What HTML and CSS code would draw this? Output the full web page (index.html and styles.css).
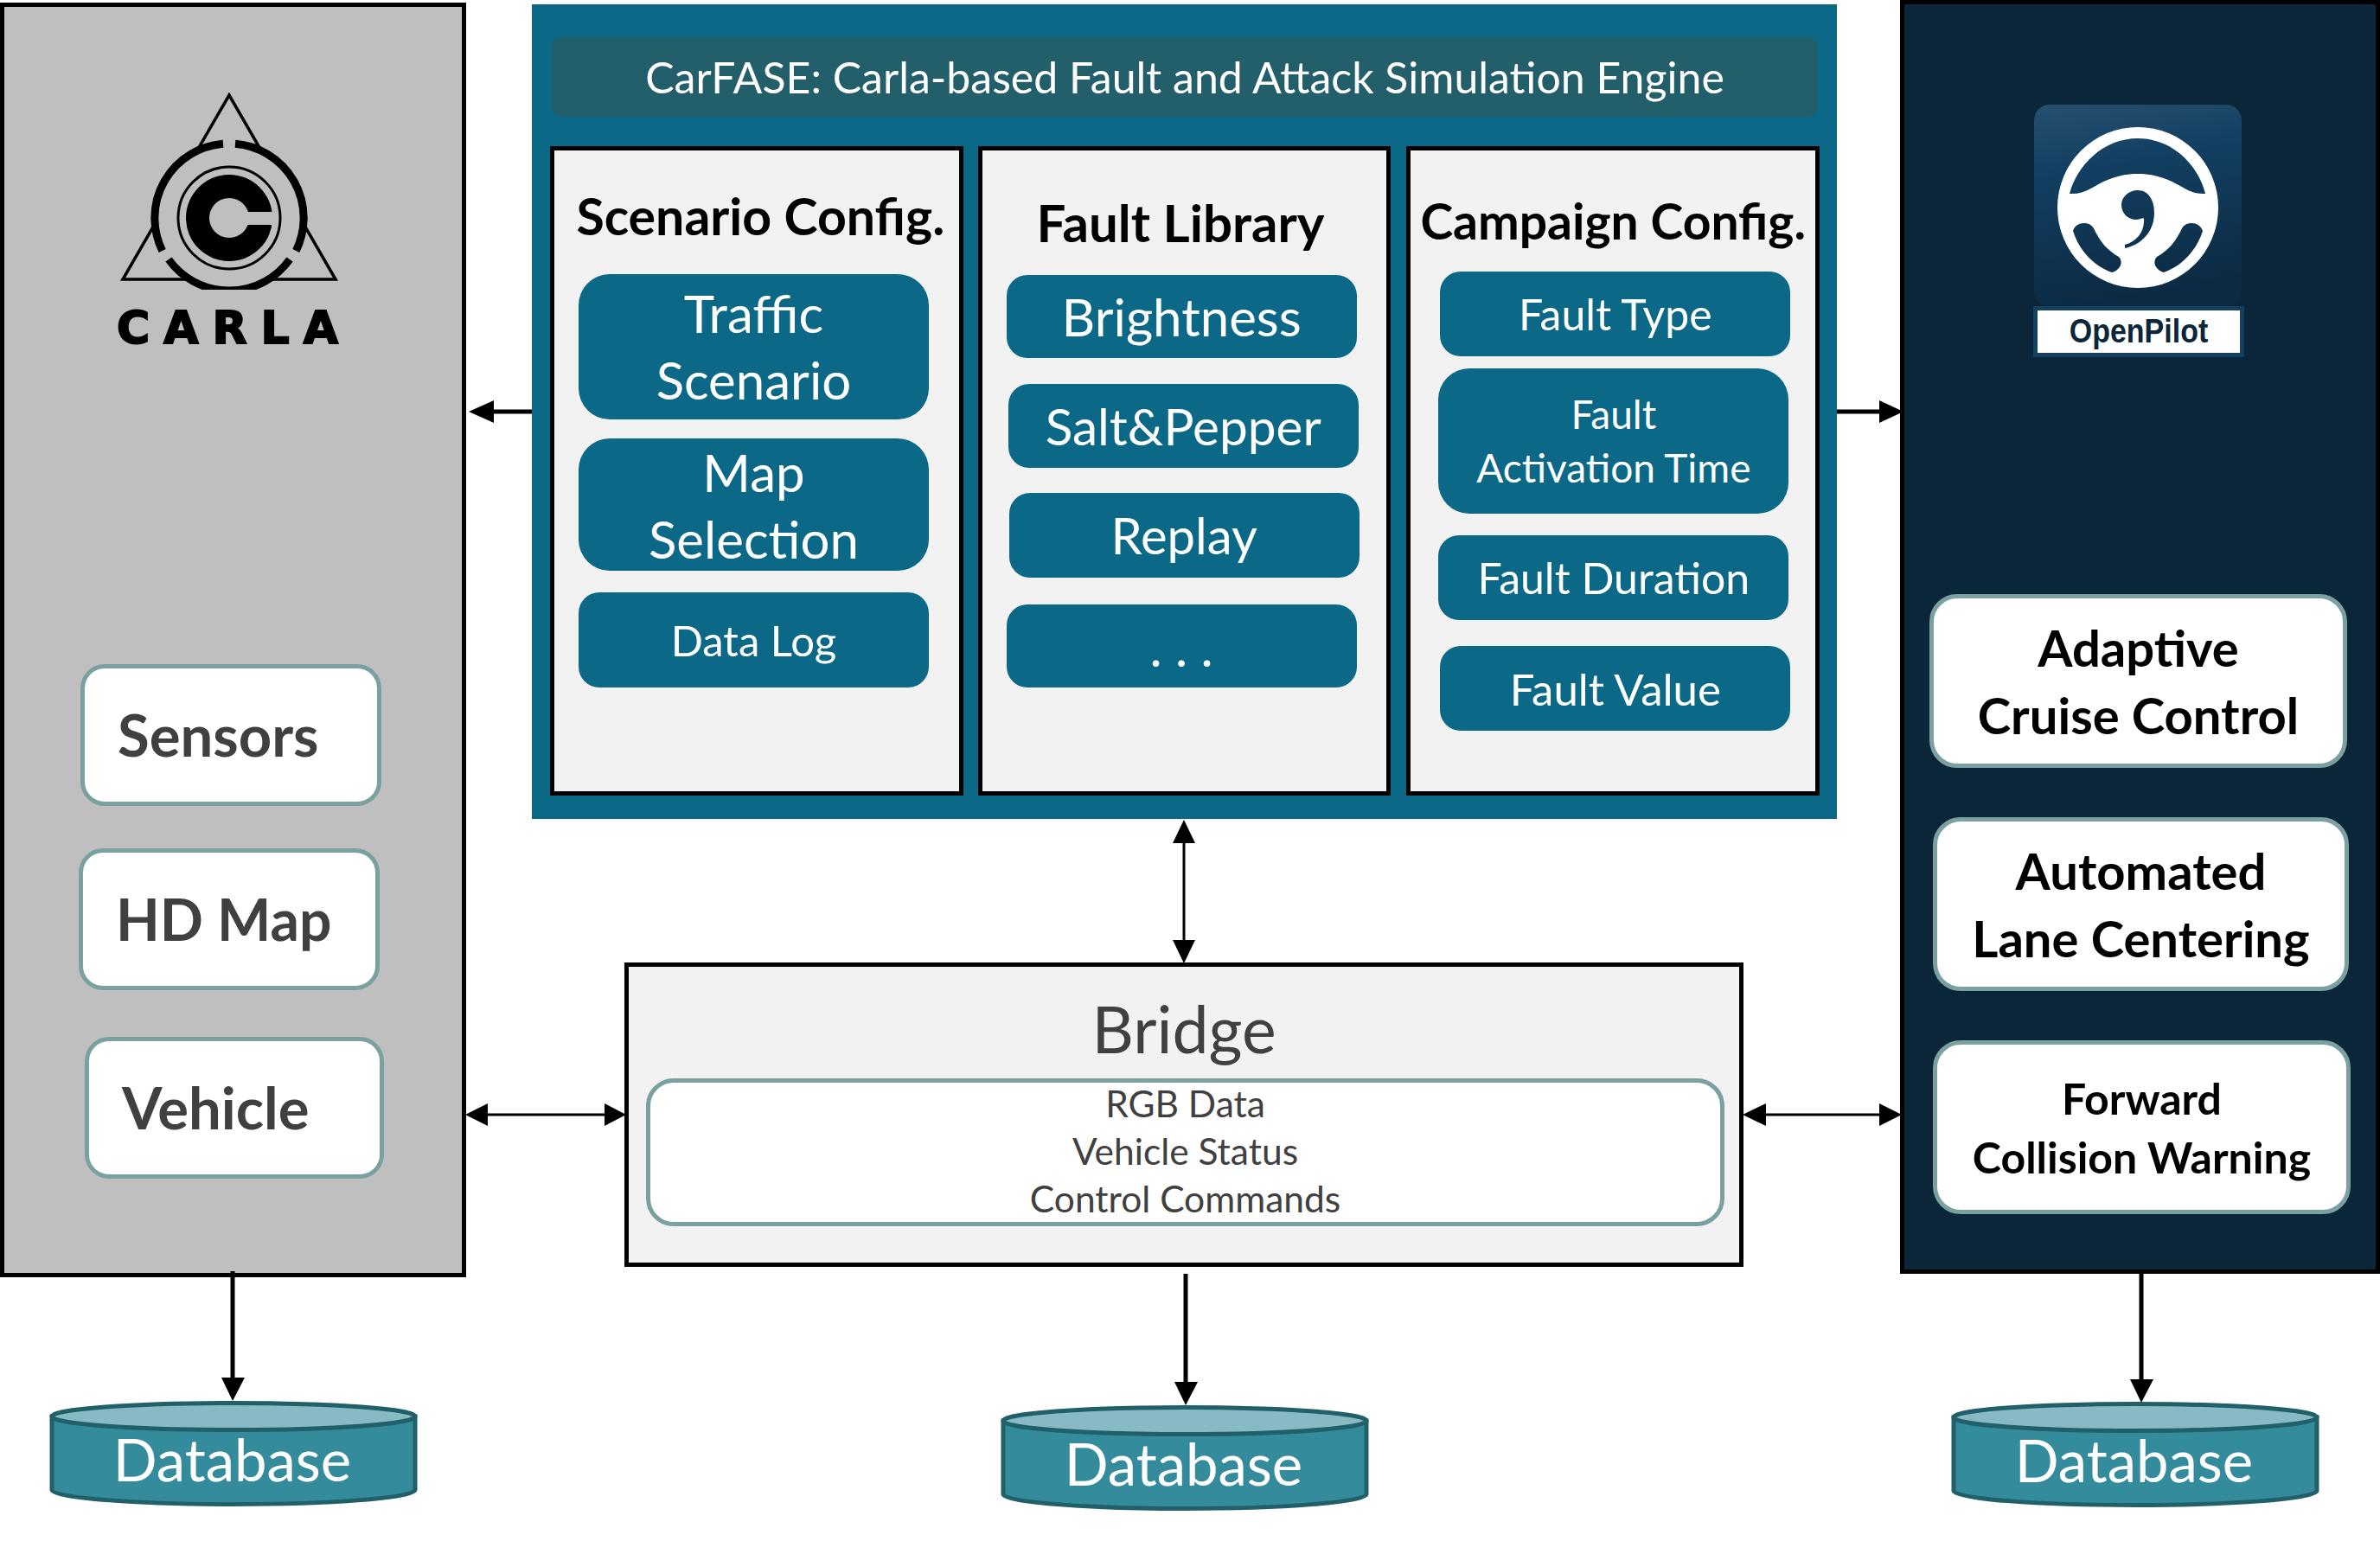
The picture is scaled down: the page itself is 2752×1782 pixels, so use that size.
FILE: index.html
```html
<!DOCTYPE html>
<html lang="en">
<head>
    <meta charset="UTF-8">
    <meta name="viewport" content="width=device-width, initial-scale=1.0">
    <title>CarFASE Architecture</title>
    <link rel="stylesheet" href="styles.css">
</head>
<body>
<div class="canvas">

    <!-- CARLA side -->
    <section class="node carla-panel">
        <div class="carla-logo">
            <svg class="carla-mark" viewBox="135 100 260 235" aria-hidden="true">
                <polygon class="mark-tri" points="265,110 142,323 388,323"/>
                <circle class="mark-mask" cx="265" cy="252" r="86"/>
                <path class="mark-ring" d="M272 166.3A86 86 0 0 1 342.3 290M187.7 290A86 86 0 0 1 258 166.3M195 300A86 86 0 0 0 335 300"/>
                <circle class="mark-thin" cx="265" cy="252" r="59"/>
                <circle cx="265" cy="252" r="50"/>
                <circle class="mark-hole" cx="265" cy="252" r="23"/>
                <rect class="mark-hole" x="265" y="245" width="55" height="15"/>
            </svg>
            <div class="carla-word">CARLA</div>
        </div>
        <div class="sim-box sensors">Sensors</div>
        <div class="sim-box hdmap">HD Map</div>
        <div class="sim-box vehicle">Vehicle</div>
    </section>

    <!-- CarFASE engine -->
    <section class="node engine">
        <div class="engine-title">CarFASE: Carla-based Fault and Attack Simulation Engine</div>
        <div class="engine-cards">
            <div class="card">
                <h3 class="card-title title-scenario">Scenario Config.</h3>
                <div class="pill traffic">Traffic<br>Scenario</div>
                <div class="pill mapsel">Map<br>Selection</div>
                <div class="pill datalog">Data Log</div>
            </div>
            <div class="card">
                <h3 class="card-title title-fault">Fault Library</h3>
                <div class="pill brightness">Brightness</div>
                <div class="pill salt">Salt&amp;Pepper</div>
                <div class="pill replay">Replay</div>
                <div class="pill more">. . .</div>
            </div>
            <div class="card card-campaign">
                <h3 class="card-title title-campaign">Campaign Config.</h3>
                <div class="pill ftype">Fault Type</div>
                <div class="pill factivation">Fault<br>Activation Time</div>
                <div class="pill fduration">Fault Duration</div>
                <div class="pill fvalue">Fault Value</div>
            </div>
        </div>
    </section>

    <!-- OpenPilot side -->
    <section class="node pilot-panel">
        <div class="pilot-logo">
            <div class="pilot-icon">
                <svg viewBox="0 0 240 233" aria-hidden="true">
                    <path class="wheel" fill-rule="evenodd" d="M27 119a93 93 0 1 0 186 0a93 93 0 1 0 -186 0Z
                        M41 103C50 70 80 39 120 39C160 39 190 70 198 103C180 104 172 94 155 87C140 81 130 80 120 80C110 80 100 81 85 87C68 94 60 104 41 103Z
                        M45 146C47 140 52 137 58 137C64 137 67 140 69 143C76 158 84 168 98 176C101 179 101 183 100 186C98 190 94 193 90 194C68 186 52 168 45 146Z
                        M195 146C193 140 188 137 182 137C176 137 173 140 171 143C164 158 156 168 142 176C139 179 139 183 140 186C142 190 146 193 150 194C172 186 188 168 195 146Z
                        M120 99C109 99 101 107 101 116C101 125 108 133 118 133C123 133 126 130 127 132C128 148 118 158 105 162L105 166C125 162 139 146 139 125C139 110 132 99 120 99Z"/>
                </svg>
            </div>
            <div class="pilot-label"><span>OpenPilot</span></div>
        </div>
        <div class="feature acc">Adaptive<br>Cruise Control</div>
        <div class="feature alc">Automated<br>Lane Centering</div>
        <div class="feature fcw">Forward<br>Collision Warning</div>
    </section>

    <!-- Bridge -->
    <section class="node bridge">
        <div class="bridge-title">Bridge</div>
        <div class="bridge-data">
            <div>RGB Data</div>
            <div>Vehicle Status</div>
            <div>Control Commands</div>
        </div>
    </section>

    <!-- Databases -->
    <div class="node db db-left">
        <svg class="db-shape" viewBox="0 0 426 122" aria-hidden="true">
            <path class="db-body" d="M3 18V103C3 112 100 119.5 213 119.5C326 119.5 423 112 423 103V18Z"/>
            <ellipse class="db-top" cx="213" cy="18" rx="210" ry="15.5"/>
        </svg>
        <span class="db-label">Database</span>
    </div>
    <div class="node db db-mid">
        <svg class="db-shape" viewBox="0 0 426 122" aria-hidden="true">
            <path class="db-body" d="M3 18V103C3 112 100 119.5 213 119.5C326 119.5 423 112 423 103V18Z"/>
            <ellipse class="db-top" cx="213" cy="18" rx="210" ry="15.5"/>
        </svg>
        <span class="db-label">Database</span>
    </div>
    <div class="node db db-right">
        <svg class="db-shape" viewBox="0 0 426 122" aria-hidden="true">
            <path class="db-body" d="M3 18V103C3 112 100 119.5 213 119.5C326 119.5 423 112 423 103V18Z"/>
            <ellipse class="db-top" cx="213" cy="18" rx="210" ry="15.5"/>
        </svg>
        <span class="db-label">Database</span>
    </div>

    <!-- Arrows between the blocks -->
    <svg class="wires" viewBox="0 0 2752 1782" aria-hidden="true">
        <line class="wire-thick" x1="565" y1="476" x2="615" y2="476"/>
        <polygon points="542,476 571,463 571,489"/>
        <line class="wire-thick" x1="2124" y1="476" x2="2180" y2="476"/>
        <polygon points="2201,476 2173,463 2173,489"/>

        <line class="wire-thin" x1="1369" y1="970" x2="1369" y2="1090"/>
        <polygon points="1369,948 1356,975 1382,975"/>
        <polygon points="1369,1114 1356,1087 1382,1087"/>

        <line class="wire-thin" x1="560" y1="1289" x2="700" y2="1289"/>
        <polygon points="538,1289 564,1276 564,1302"/>
        <polygon points="724,1289 699,1276 699,1302"/>

        <line class="wire-thin" x1="2035" y1="1289" x2="2175" y2="1289"/>
        <polygon points="2015,1289 2042,1276 2042,1302"/>
        <polygon points="2199,1289 2173,1276 2173,1302"/>

        <line class="wire-thick" x1="269" y1="1470" x2="269" y2="1600"/>
        <polygon points="269,1620 256,1593 283,1593"/>
        <line class="wire-thick" x1="1371" y1="1473" x2="1371" y2="1605"/>
        <polygon points="1371,1625 1358,1598 1385,1598"/>
        <line class="wire-thick" x1="2476" y1="1471" x2="2476" y2="1602"/>
        <polygon points="2476,1622 2463,1595 2490,1595"/>
    </svg>
</div>
</body>
</html>
```

FILE: styles.css
```css
* {
    box-sizing: border-box;
}
body {
    margin: 0;
    background-color: white;
    font-family: Lato, "Open Sans", sans-serif;
}
.canvas {
    position: relative;
    width: 2752px;
    height: 1782px;
    overflow: hidden;
}
.node {
    position: absolute;
}

/* CARLA panel */
.carla-panel {
    left: 0;
    top: 3px;
    width: 539px;
    height: 1474px;
    background-color: #bfbfbf;
    border: 5px solid black;
}
.carla-logo {
    width: 260px;
    margin: 92px 0 0 130px;
    text-align: center;
}
.carla-mark {
    display: block;
    width: 260px;
    height: 235px;
}
.mark-tri {
    fill: none;
    stroke: black;
    stroke-width: 3.5px;
}
.mark-mask {
    fill: #bfbfbf;
}
.mark-ring {
    fill: none;
    stroke: black;
    stroke-width: 9px;
}
.mark-thin {
    fill: none;
    stroke: black;
    stroke-width: 3px;
}
.mark-hole {
    fill: #bfbfbf;
}
.carla-word {
    margin: 26px -20px 0;
    padding-left: 12px;
    font-family: "DejaVu Sans", sans-serif;
    font-weight: bold;
    font-size: 52px;
    line-height: 37px;
    letter-spacing: 16px;
    color: black;
    -webkit-text-stroke: 2px black;
    white-space: nowrap;
}
.sim-box {
    display: flex;
    align-items: center;
    width: 348px;
    height: 164px;
    padding: 0 0 2px 38px;
    background-color: white;
    border: 5px solid #7ba0a0;
    border-radius: 28px;
    font-weight: bold;
    font-size: 67px;
    color: #404040;
}
.sensors {
    margin: 370px 0 0 88px;
}
.hdmap {
    margin: 49px 0 0 86px;
    font-size: 66px;
}
.vehicle {
    margin: 54px 0 0 93px;
    width: 346px;
}

/* Engine */
.engine {
    left: 615px;
    top: 5px;
    width: 1509px;
    height: 942px;
    padding: 38px 20px 0 21px;
    background-color: #0b6886;
}
.engine-title {
    display: flex;
    align-items: center;
    justify-content: center;
    height: 92px;
    margin: 0 2px;
    background-color: #235f6b;
    border-radius: 12px;
    color: white;
    font-size: 50px;
}
.engine-cards {
    display: flex;
    gap: 17px;
    margin-top: 34px;
}
.card {
    width: 479px;
    height: 751px;
    background-color: #f2f2f2;
    border: 5px solid black;
}
.card-campaign {
    margin-left: 1px;
}
.card-title {
    display: flex;
    align-items: center;
    justify-content: center;
    margin: 0;
    font-size: 60px;
    font-weight: bold;
    color: black;
    white-space: nowrap;
}
.title-scenario {
    height: 143px;
    padding: 8px 0 0 9px;
    font-size: 59px;
}
.title-fault {
    height: 144px;
    padding: 21px 9px 0 0;
}
.title-campaign {
    height: 140px;
    padding: 22px 0 0 0;
    font-size: 57px;
}
.pill {
    display: flex;
    align-items: center;
    justify-content: center;
    text-align: center;
    width: 405px;
    background-color: #0b6886;
    border-radius: 24px;
    color: white;
    font-size: 60px;
    line-height: 77px;
}
.traffic {
    height: 168px;
    margin-left: 28px;
    border-radius: 36px;
}
.mapsel {
    height: 153px;
    margin: 22px 0 0 28px;
    padding-top: 2px;
    border-radius: 36px;
}
.datalog {
    height: 110px;
    margin: 25px 0 0 28px;
    font-size: 49px;
}
.brightness {
    height: 96px;
    margin-left: 28px;
}
.salt {
    height: 97px;
    margin: 30px 0 0 30px;
    font-size: 58.5px;
}
.replay {
    height: 98px;
    margin: 29px 0 0 31px;
    padding-bottom: 2px;
    font-size: 58px;
}
.more {
    height: 96px;
    margin: 31px 0 0 28px;
    padding-top: 2px;
}
.ftype {
    height: 98px;
    margin-left: 34px;
    font-size: 50px;
}
.factivation {
    height: 168px;
    margin: 14px 0 0 32px;
    border-radius: 36px;
    font-size: 46px;
    line-height: 62px;
}
.fduration {
    height: 98px;
    margin: 25px 0 0 32px;
    font-size: 50px;
}
.fvalue {
    height: 98px;
    margin: 30px 0 0 34px;
    font-size: 51px;
}

/* OpenPilot panel */
.pilot-panel {
    left: 2197px;
    top: 0;
    width: 555px;
    height: 1473px;
    background-color: #0b2539;
    border: 5px solid black;
}
.pilot-logo {
    width: 244px;
    margin: 116px 0 0 149px;
}
.pilot-icon {
    width: 240px;
    height: 233px;
    margin-left: 1px;
    border-radius: 18px;
    background: linear-gradient(170deg, #27506f 0%, #123f62 30%, #0c2a42 90%);
}
.pilot-icon svg {
    display: block;
    width: 240px;
    height: 233px;
}
.wheel {
    fill: white;
}
.pilot-label {
    display: flex;
    align-items: center;
    justify-content: center;
    height: 59px;
    background-color: white;
    border: 5px solid #14405f;
}
.pilot-label span {
    font-family: "Liberation Sans", Arial, sans-serif;
    font-weight: bold;
    font-size: 34px;
    color: #0b2539;
    transform: scaleY(1.12);
}
.feature {
    display: flex;
    align-items: center;
    justify-content: center;
    text-align: center;
    width: 483px;
    height: 201px;
    background-color: white;
    border: 5px solid #7ba0a0;
    border-radius: 32px;
    font-weight: bold;
    font-size: 58px;
    line-height: 78px;
    color: black;
}
.acc {
    margin: 274px 0 0 29px;
}
.alc {
    margin: 57px 0 0 33px;
    width: 481px;
}
.fcw {
    margin: 57px 0 0 33px;
    font-size: 50px;
    line-height: 68px;
}

/* Bridge */
.bridge {
    left: 722px;
    top: 1113px;
    width: 1294px;
    height: 352px;
    background-color: #f2f2f2;
    border: 5px solid black;
}
.bridge-title {
    display: flex;
    align-items: center;
    justify-content: center;
    height: 129px;
    padding-top: 13px;
    font-size: 75px;
    color: #404040;
}
.bridge-data {
    display: flex;
    flex-direction: column;
    justify-content: center;
    width: 1247px;
    height: 171px;
    margin-left: 20px;
    padding-bottom: 4px;
    background-color: white;
    border: 5px solid #7ba0a0;
    border-radius: 32px;
    text-align: center;
    font-size: 42.5px;
    line-height: 55px;
    color: #404040;
}

/* Databases */
.db {
    display: flex;
    align-items: center;
    justify-content: center;
    width: 426px;
    height: 122px;
    padding: 12px 3px 0 0;
}
.db-left {
    left: 57px;
    top: 1620px;
}
.db-mid {
    left: 1157px;
    top: 1625px;
}
.db-right {
    left: 2256px;
    top: 1621px;
}
.db-shape {
    position: absolute;
    left: 0;
    top: 0;
    width: 426px;
    height: 122px;
}
.db-body {
    fill: #348b9b;
    stroke: #215f69;
    stroke-width: 5px;
}
.db-top {
    fill: #87bac3;
    stroke: #215f69;
    stroke-width: 5px;
}
.db-label {
    position: relative;
    color: white;
    font-size: 67px;
}

/* Arrows */
.wires {
    position: absolute;
    left: 0;
    top: 0;
    width: 2752px;
    height: 1782px;
    pointer-events: none;
}
.wire-thick {
    stroke: black;
    stroke-width: 5px;
}
.wire-thin {
    stroke: black;
    stroke-width: 3px;
}
```
